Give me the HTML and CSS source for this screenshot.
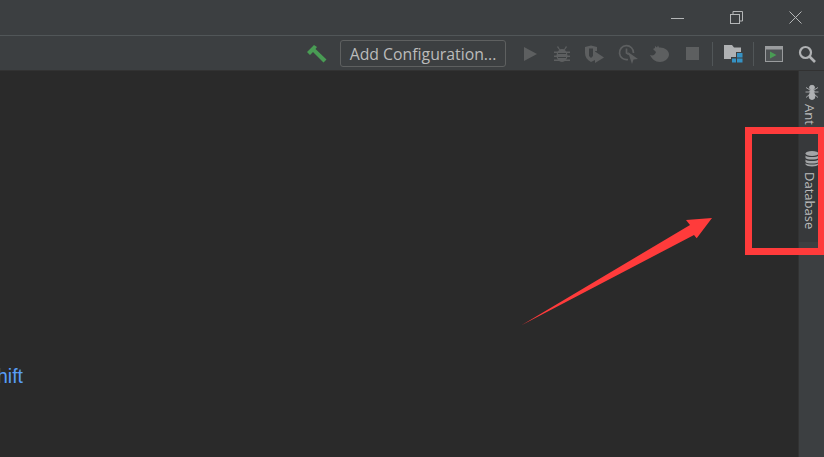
FILE: index.html
```html
<!DOCTYPE html>
<html lang="en">
<head>
<meta charset="utf-8">
<title>IDE</title>
<link rel="stylesheet" href="styles.css">
</head>
<body>
<div class="app">
  <header class="titlebar">
    <svg class="win win-min" width="13" height="13" viewBox="0 0 13 13"><path d="M0 7.500H13" stroke="#b4b6b7" stroke-width="1"/></svg>
    <svg class="win win-max" width="13" height="13" viewBox="0 0 13 13" fill="none" stroke="#b4b6b7"><rect x=".5" y="3.500" width="9" height="9"/><path d="M3 3.500V.5H12.500V10H9.500"/></svg>
    <svg class="win win-close" width="13" height="13" viewBox="0 0 13 13" stroke="#b4b6b7" stroke-width="1"><path d="M.5 .5L12.500 12.500M12.500 .5L.5 12.500"/></svg>
  </header>
  <nav class="toolbar">
    <svg class="icon hammer" width="22" height="20" viewBox="0 0 22 20"><path d="M1 8L8 1L11 3L9.500 5L20.500 15.500L17.500 18.500L7 8L4 11Z" fill="#499c54"/></svg>
    <button class="config">Add Configuration...</button>
    <svg class="icon i-run" width="16" height="16" viewBox="0 0 16 16"><path d="M2 1L15 8L2 15Z" fill="#5d5f60"/></svg>
    <svg class="icon i-bug" width="18" height="18" viewBox="0 0 18 18" fill="#5d5f60"><ellipse cx="9" cy="10.500" rx="5.500" ry="6.500"/><path d="M5 1L7 4.500H11L13 1L14 2L11 6H7L4 2Z"/><path d="M1 6.500H17V8H1ZM1 10.500H17V12H1ZM1 14.500H17V16H1Z"/><path d="M5 8H13V9H5ZM5 12H13V13H5Z" fill="#3c3f41"/></svg>
    <svg class="icon i-cov" width="20" height="18" viewBox="0 0 20 18" fill="#5d5f60"><path d="M1 2L7 .5L13 2V6L11 6V15L7 17C3 15 1 12 1 8Z"/><path d="M5 3.500H9V11L7 13L5 11Z" fill="#3c3f41"/><path d="M11 6.500L20 12.500L11 18Z"/></svg>
    <svg class="icon i-prof" width="20" height="20" viewBox="0 0 20 20" fill="none" stroke="#5d5f60" stroke-width="1.700"><path d="M10 15.500A7 7 0 1 1 15.500 9"/><path d="M8.500 4.500V9L11 10.500"/><path d="M10 8L20 15L15.500 15.500L14 20Z" fill="#5d5f60" stroke="none"/></svg>
    <svg class="icon i-hand" width="20" height="18" viewBox="0 0 20 18" fill="#5d5f60"><path d="M1 10C4 11 6 10 7 7L4 4L6 3L6 1L8 2.500L9 .5L10 2.500C15 2 20 5 20 9.500C20 14 15 17 11 17C6 17 3 14 1 10Z"/></svg>
    <span class="stop"></span>
    <span class="sep sep-a"></span>
    <svg class="icon i-folder" width="20" height="19" viewBox="0 0 20 19"><path d="M0 1H8L10 3.500H17V8H12V13H7V15H0Z" fill="#afb1b3"/><path d="M13 9H18.500V13.500H13Z" fill="#3592c4"/><path d="M8 14.500H12V18.500H8Z" fill="#3592c4"/><path d="M13 14.500H18.500V18.500H13Z" fill="#3592c4"/></svg>
    <span class="sep sep-b"></span>
    <svg class="icon i-term" width="18" height="16" viewBox="0 0 18 16"><rect x=".5" y=".5" width="17" height="15" fill="#4e5254" stroke="#9a9c9e"/><path d="M1 1H17V3.500H1Z" fill="#9a9c9e"/><path d="M5 5.500L11.500 9L5 12.500Z" fill="#499c54"/></svg>
    <svg class="icon i-search" width="18" height="18" viewBox="0 0 18 18" fill="none" stroke="#afb1b3" stroke-width="2.200"><circle cx="7.500" cy="7.500" r="5.500"/><path d="M11.500 11.500L17 17" stroke-width="2.600"/></svg>
  </nav>
  <div class="workspace">
    <main class="editor">
      <a class="hint">hift</a>
    </main>
    <aside class="strip">
      <div class="tool tool-ant">
        <svg width="14" height="16" viewBox="0 0 14 16" fill="#afb1b3" stroke="#afb1b3" stroke-width=".9"><ellipse cx="7" cy="3.500" rx="2.500" ry="2.200"/><ellipse cx="7" cy="7.500" rx="2.200" ry="2"/><ellipse cx="7" cy="12" rx="3" ry="3.500"/><path d="M5 6L1 3.500M9 6L13 3.500M5 8H.5M9 8H13.500M5 10L1 13.500M9 10L13 13.500" fill="none"/></svg>
        <span class="tool-label">Ant</span>
      </div>
      <div class="tool tool-db">
        <svg width="14" height="16" viewBox="0 0 14 16" fill="#a3a5a7"><ellipse cx="7" cy="2.500" rx="6.500" ry="2.500"/><path d="M.5 4.500C2 6.500 12 6.500 13.500 4.500V7C12 9 2 9 .5 7ZM.5 8.500C2 10.500 12 10.500 13.500 8.500V11C12 13 2 13 .5 11ZM.5 12.200C2 14 12 14 13.500 12.200V13.500C12 16 2 16 .5 13.500Z"/></svg>
        <span class="tool-label">Database</span>
      </div>
    </aside>
  </div>
  <div class="mark-box"></div>
  <svg class="mark-arrow" width="200" height="115" viewBox="0 0 200 115"><path d="M1 110.500L170 10L166 5L192 3L176.700 23.300L174 20Z" fill="#ff3b3b"/></svg>
</div>
</body>
</html>
```

FILE: styles.css
```css
* { box-sizing: border-box; }
html, body { margin: 0; padding: 0; height: 100%; overflow: hidden; background: #2a2a2a; }
.app { position: relative; display: flex; flex-direction: column; width: 824px; height: 457px; font-family: "Open Sans", "Liberation Sans", sans-serif; overflow: hidden; }

.titlebar { flex: 0 0 36px; display: flex; align-items: center; background: #3c3f41; border-bottom: 1px solid #515658; }
.win { display: block; }
.win-min { margin-left: 671px; }
.win-max { margin-left: 46px; }
.win-close { margin-left: 46px; }

.toolbar { flex: 0 0 35px; display: flex; align-items: center; background: #3c3f41; border-bottom: 1px solid #323232; padding-top: 1px; }
.icon { display: block; flex: none; }
.hammer { margin-left: 306px; }
.config { width: 166px; height: 27px; margin-left: 12px; padding: 1px 0 0; background: #3c3f41; border: 1px solid #5e6060; border-radius: 3px; color: #bbbbbb; font: 15.800px "Open Sans", "Liberation Sans", sans-serif; text-align: center; white-space: nowrap; }
.i-run { margin-left: 16px; }
.i-bug { margin-left: 15px; }
.i-cov { margin-left: 13px; }
.i-prof { margin-left: 14px; }
.i-hand { margin-left: 11px; }
.stop { flex: none; width: 13px; height: 13px; margin-left: 17px; background: #5d5f60; }
.sep { flex: none; width: 1px; height: 24px; background: #515658; }
.sep-a { margin-left: 13px; }
.i-folder { margin-left: 11px; }
.sep-b { margin-left: 9px; }
.i-term { margin-left: 11px; }
.i-search { margin-left: 15px; }

.workspace { flex: 1; display: flex; min-height: 0; }
.editor { flex: 1; display: flex; align-items: flex-start; background: #2a2a2a; padding-top: 293px; min-width: 0; }
.hint { display: block; margin-left: -3px; color: #589df6; font: 19.500px/24px "Liberation Sans", sans-serif; }

.strip { flex: 0 0 26px; display: flex; flex-direction: column; background: #3c3f41; border-left: 1px solid #323232; }
.tool { display: flex; flex-direction: column; align-items: center; }
.tool-ant { height: 62px; padding-top: 13px; gap: 4px; overflow: hidden; }
.tool-db { height: 109px; padding-top: 18px; gap: 5px; background: #37393b; }
.tool-label { writing-mode: vertical-rl; margin-right: 3px; color: #bbbbbb; font: 13px/14px "Open Sans", "Liberation Sans", sans-serif; }

.mark-box { position: absolute; left: 745px; top: 127px; width: 79px; height: 128px; border: 7px solid #ff3b3b; border-right-width: 6px; }
.mark-arrow { position: absolute; left: 520px; top: 215px; }
```
